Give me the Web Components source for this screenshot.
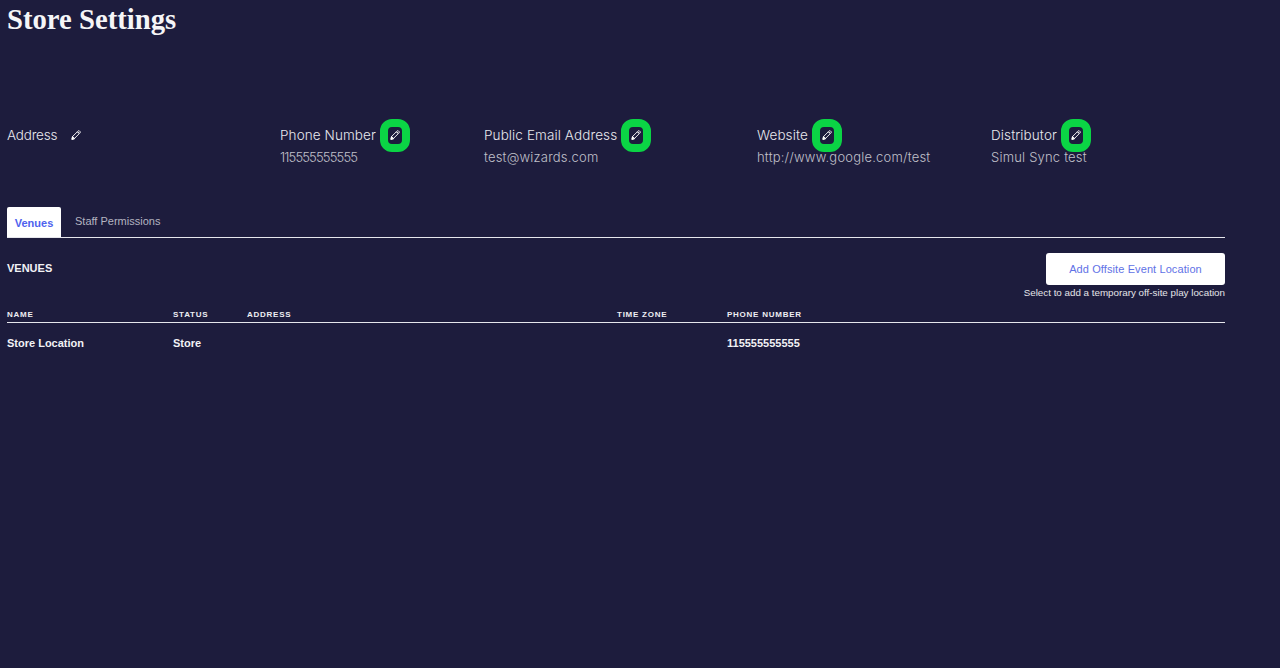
<!DOCTYPE html>
<html lang="en">
<head>
<meta charset="utf-8">
<title>Store Settings</title>
<style>
  html, body { margin: 0; height: 100%; background: #1d1c3d; }
  body { padding: 0 55px 0 7px; box-sizing: border-box; font-family: "Liberation Sans", Arial, sans-serif; color: #fff; }
</style>
</head>
<body>
<store-settings></store-settings>

<script>
// pencil shared by every info field
const PENCIL = `<svg viewBox="0 0 12 12" width="10" height="10" fill="none" stroke="currentColor" stroke-width="1.1" stroke-linejoin="round" stroke-linecap="round">
  <path d="M1.2 10.8l.7-3 5.6-5.6 2.3 2.3-5.6 5.6z"/><path d="M1.2 10.8l.7-3 2.3 2.3z" fill="currentColor"/>
  <path d="M8.3 1.4l.5-.4a.9.9 0 0 1 1.2 0l1 1a.9.9 0 0 1 0 1.2l-.5.5z"/>
</svg>`;

class InfoField extends HTMLElement {
  constructor() {
    super();
    this.attachShadow({ mode: 'open' });
  }

  connectedCallback() {
    const focused = this.hasAttribute('focused');
    this.shadowRoot.innerHTML = `
      <style>
        :host {
          display: block;
          font-family: Inter, "Open Sans", sans-serif;
          font-size: 13.5px;
          font-weight: 300;
          letter-spacing: .1px;
          line-height: 18px;
        }
        .head {
          display: flex;
          align-items: center;
          height: 18px;
          color: #e8e8ee;
        }
        button {
          display: flex;
          align-items: center;
          justify-content: center;
          box-sizing: border-box;
          width: 14px;
          height: 17px;
          margin-left: 12px;
          padding: 0;
          border: 0;
          border-radius: 4px;
          background: none;
          color: #fff;
        }
        button.focused {
          outline: 8px solid #0bd445;
          outline-offset: 0;
        }
        .value {
          margin-top: 4px;
          height: 18px;
          font-size: 13px;
          letter-spacing: .2px;
          color: #c0c0ca;
        }
        ::slotted(.digits) { letter-spacing: -.85px; }
        ::slotted(.tight) { letter-spacing: -.2px; }
      </style>
      <div class="head"><slot name="label"></slot><button class="${focused ? 'focused' : ''}" aria-label="Edit">${PENCIL}</button></div>
      <div class="value"><slot></slot></div>
    `;
  }
}

class VenueTabs extends HTMLElement {
  constructor() {
    super();
    this.attachShadow({ mode: 'open' });
    this.shadowRoot.innerHTML = `
      <style>
        :host {
          display: flex;
          align-items: flex-start;
          height: 30px;
          border-bottom: 1px solid #e6e6ec;
          font-size: 11px;
        }
        .tab { box-sizing: border-box; height: 30px; }
        .active {
          width: 54px;
          padding-top: 10px;
          background: #fff;
          border-radius: 2px 2px 0 0;
          color: #4e62ee;
          font-weight: 700;
          text-align: center;
        }
        .other {
          margin-left: 14px;
          padding-top: 8px;
          color: #b4b4c0;
        }
      </style>
      <div class="tab active">Venues</div>
      <div class="tab other">Staff Permissions</div>
    `;
  }
}

class VenuesPanel extends HTMLElement {
  constructor() {
    super();
    this.attachShadow({ mode: 'open' });
    this.shadowRoot.innerHTML = `
      <style>
        :host { display: block; }
        .top {
          display: flex;
          justify-content: space-between;
          align-items: flex-start;
          padding-top: 15px;
        }
        h2 {
          margin: 8px 0 0;
          font-size: 11px;
          line-height: 14px;
          font-weight: 700;
          color: #f2f2f5;
        }
        .action {
          display: flex;
          flex-direction: column;
          align-items: flex-end;
        }
        .add {
          box-sizing: border-box;
          width: 179px;
          height: 32px;
          padding: 0;
          border: 0;
          border-radius: 3px;
          background: #fff;
          color: #5f72e6;
          font: 11px "Liberation Sans", Arial, sans-serif;
          letter-spacing: .1px;
        }
        .hint {
          margin-top: 1px;
          font-size: 9.8px;
          line-height: 13px;
          color: #e4e4e8;
        }
        .row {
          display: grid;
          grid-template-columns: 166px 74px 370px 110px 1fr;
        }
        .heads {
          margin-top: 9px;
          height: 13px;
          padding-bottom: 1px;
          border-bottom: 1px solid #e6e6ec;
          font-size: 8px;
          line-height: 13px;
          font-weight: 700;
          letter-spacing: .75px;
          color: #eeeef2;
        }
        .cells {
          margin-top: 13px;
          font-size: 11px;
          line-height: 14px;
          font-weight: 700;
          color: #f2f2f5;
        }
      </style>
      <div class="top">
        <h2>VENUES</h2>
        <div class="action">
          <button class="add">Add Offsite Event Location</button>
          <div class="hint">Select to add a temporary off-site play location</div>
        </div>
      </div>
      <div class="row heads"><div>NAME</div><div>STATUS</div><div>ADDRESS</div><div>TIME ZONE</div><div>PHONE NUMBER</div></div>
      <div class="row cells"><div>Store Location</div><div>Store</div><div></div><div></div><div>115555555555</div></div>
    `;
  }
}

class StoreSettings extends HTMLElement {
  constructor() {
    super();
    this.attachShadow({ mode: 'open' });
    this.shadowRoot.innerHTML = `
      <style>
        :host { display: block; }
        h1 {
          margin: 0;
          padding-top: 2px;
          height: 35px;
          font: 700 28.7px/34px "Liberation Serif", "Times New Roman", serif;
          color: #f5f5f7;
        }
        .info {
          display: grid;
          grid-template-columns: 273px 204px 273px 234px 1fr;
          margin-top: 89px;
        }
        venue-tabs { margin-top: 41px; }
      </style>
      <h1>Store Settings</h1>
      <div class="info">
        <info-field><span slot="label" class="tight">Address</span></info-field>
        <info-field focused><span slot="label">Phone Number</span><span class="digits">115555555555</span></info-field>
        <info-field focused><span slot="label">Public Email Address</span>test@wizards.com</info-field>
        <info-field focused><span slot="label">Website</span>http://www.google.com/test</info-field>
        <info-field focused><span slot="label">Distributor</span>Simul Sync test</info-field>
      </div>
      <venue-tabs></venue-tabs>
      <venues-panel></venues-panel>
    `;
  }
}

customElements.define('info-field', InfoField);
customElements.define('venue-tabs', VenueTabs);
customElements.define('venues-panel', VenuesPanel);
customElements.define('store-settings', StoreSettings);
</script>
</body>
</html>
